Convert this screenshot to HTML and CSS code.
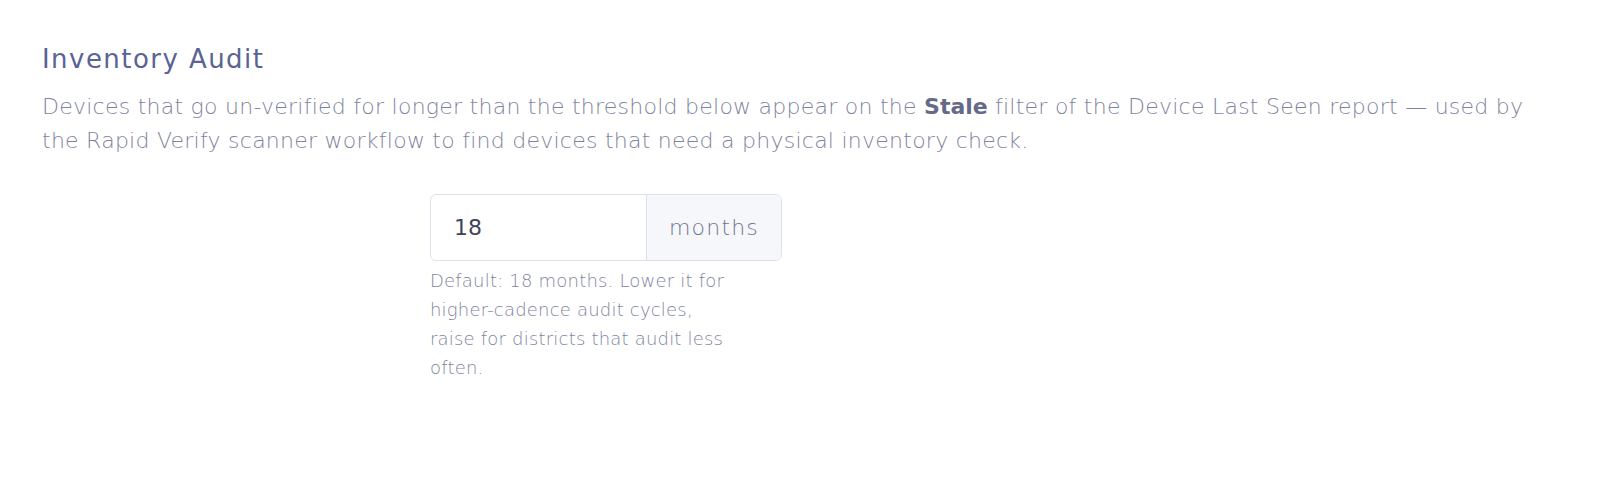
FILE: index.html
```html
<!DOCTYPE html>
<html>
<head>
<meta charset="utf-8">
<link rel="stylesheet" href="styles.css">
</head>
<body>
<section class="panel">
  <h2 class="title">Inventory Audit</h2>
  <p class="desc">Devices that go un-verified for longer than the threshold below appear on the <strong>Stale</strong> filter of the Device Last Seen report — used by the Rapid Verify scanner workflow to find devices that need a physical inventory check.</p>
  <div class="row">
    <div class="label-col"></div>
    <div class="control-col">
      <div class="input-group">
        <div class="input">18</div>
        <div class="addon">months</div>
      </div>
      <p class="help">Default: 18 months. Lower it for higher-cadence audit cycles, raise for districts that audit less often.</p>
    </div>
  </div>
</section>
</body>
</html>
```
FILE: styles.css
```css
* { box-sizing: border-box; }
html, body { margin: 0; padding: 0; background: #fff; }
body { font-family: "DejaVu Sans", "Open Sans", sans-serif; }
.panel { padding: 41px 42px 0 42px; width: 1584px; }
.title { margin: 0; font-size: 26px; font-weight: 400; color: #5b6394; line-height: 36px; letter-spacing: 1.45px; }
.desc { margin: 13px 0 0 0; width: 1505px; font-size: 22px; font-weight: 300; color: #7f849e; line-height: 34px; letter-spacing: 0.25px; }
.desc strong { font-weight: 700; color: #646a88; letter-spacing: 0; }
.row { display: grid; grid-template-columns: 388px 352px; margin-top: 36px; }
.input-group { display: flex; height: 67px; border: 1px solid #dfe1ea; border-radius: 6px; overflow: hidden; }
.input { width: 215px; padding-left: 23px; display: flex; align-items: center; font-size: 22px; color: #3f4458; font-weight: 400; }
.addon { flex: 1; background: #f6f7fa; border-left: 1px solid #dfe1ea; display: flex; align-items: center; justify-content: center; font-size: 22px; letter-spacing: 1.2px; color: #6f7492; font-weight: 300; }
.help { margin: 5px 0 0 0; font-size: 18px; line-height: 29px; color: #7f849e; font-weight: 300; width: 305px; letter-spacing: 0.2px; }
```
